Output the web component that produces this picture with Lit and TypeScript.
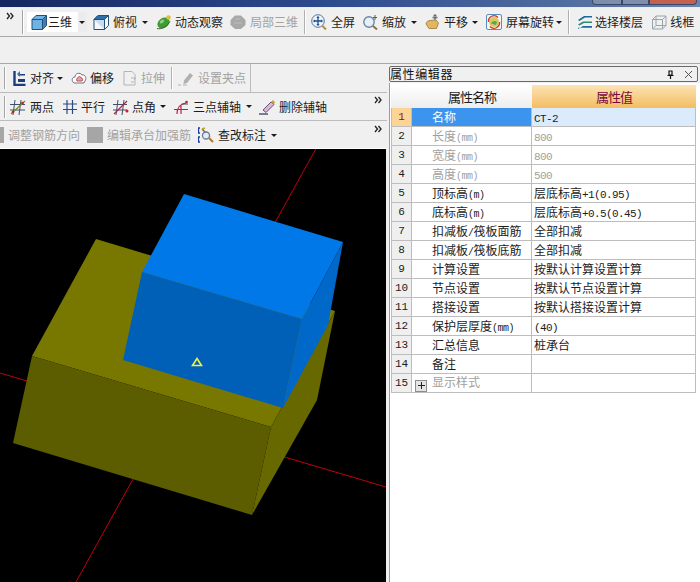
import { LitElement, html, css, svg } from 'lit';
import { customElement } from 'lit/decorators.js';

type Tool = {
  icon: string;
  label: string;
  arrow?: 'mid' | 'near' | 'tight';
  off?: boolean;
  gap?: 1 | 2 | 3;
};

const icons: Record<string, unknown> = {
  cube: svg`<path d="M1 5.500 5 1.500h10.500v10L11.500 15.500H1z" fill="#6fb2e4" stroke="#274e74"/><path d="M1 5.500h10.500v10M11.500 5.500l4-4" fill="none" stroke="#274e74"/><path d="M12 5.800 15 2.500v8.700L12 14.500z" fill="#3d7fb5"/>`,
  top: svg`<path d="M1 5.500 5 1.500h10.500v10L11.500 15.500H1z" fill="#f4f8fc" stroke="#274e74"/><path d="M1 5.500 5 1.500h10.500l-4 4z" fill="#2f6ea8" stroke="#274e74"/><path d="M11.500 5.500v10" stroke="#274e74"/><path d="M1.500 6h9.500v9z" fill="#c7def2"/>`,
  orbit: svg`<ellipse cx="7.500" cy="9" rx="6.500" ry="5" fill="#3f9a38" transform="rotate(-35 7.500 9)"/><ellipse cx="6" cy="7.500" rx="2.500" ry="1.600" fill="#8fd07c" transform="rotate(-35 6 7.500)"/><circle cx="12.500" cy="3.500" r="2.300" fill="#d8c23c"/><path d="M1 14.500c4 1 9-1 13-7" fill="none" stroke="#4a5a3a"/>`,
  local: svg`<path d="M5 1.500h6L15.500 6v5L11 15H5L.5 11V6z" fill="#a8a8a8"/><path d="M5 5h5M4 9h8" stroke="#bcbcbc"/>`,
  full: svg`<circle cx="7" cy="7" r="6.300" fill="#eef3fa" stroke="#51749c"/><path d="M7 2.800v8.400M2.800 7h8.400" stroke="#1c4f94" stroke-width="1.300"/><path d="M7 2 5.400 4h3.200zM7 12l-1.600-2h3.200zM2 7l2-1.600v3.200zM12 7l-2-1.600v3.200z" fill="#1c4f94"/><path d="m11.500 12 3.500 3.500" stroke="#b88a3c" stroke-width="2"/>`,
  zoom: svg`<circle cx="7" cy="8" r="5.200" fill="#e6eef8" stroke="#6b86a8" stroke-width="1.400"/><path d="m11 12 4 3.500" stroke="#8a7440" stroke-width="2"/><path d="M13 1v5M11 3.500h4" stroke="#486a40"/>`,
  pan: svg`<path d="M1 10c0-2 2-3.500 4-3.500l6-.5 2.500 3-2 5.500H4z" fill="#e3b760" stroke="#8c6a2a" stroke-width=".7"/><path d="M10 6V1M8.300 2.500 10 .5l1.700 2M7.500 3.800h5" fill="none" stroke="#3f4f66"/>`,
  rotate: svg`<rect x=".5" y=".5" width="15" height="15" rx="1.500" fill="#f4f6f4" stroke="#5b8cc0"/><circle cx="8" cy="8" r="5" fill="#d8c860"/><path d="M5 9.500c1-2.500 4-3.500 6-1.500l-1 3z" fill="#56a858"/><path d="M2.500 8A5.500 5.500 0 0 1 12 3.500M13.500 8A5.500 5.500 0 0 1 4 12.500" fill="none" stroke="#cc3a28" stroke-width="1.300"/>`,
  floors: svg`<path d="M1 6 7 2h8v1.600H8L2.500 7z" fill="#1c6a9c"/><path d="M1 10.500 6 7.500h9V9H7L2.500 11.500z" fill="#2f8a70"/><path d="M1 15l5-3h9v1.800H1z" fill="#1c6a9c"/>`,
  wire: svg`<path d="M1.500 5.500 5 2h10v9.500L11.500 15h-10zM1.500 5.500h10V15M11.500 5.500 15 2M5 2v9.500h10M5 11.500 1.500 15" fill="none" stroke="#9aa4ac"/>`,
  align: svg`<path d="M1.500 1v14h11" fill="none" stroke="#1a3f7c" stroke-width="2.400"/><path d="M5 4h7v1.500H5zM5 9h7v3H5z" fill="#1a3f7c"/><path d="m7 1-3 3 3 3z" fill="#2e74b8"/>`,
  offset: svg`<path d="M3 13c-3-2-2-6 1-6 0-4 5-5 7-2 3-1 5 3 3 6l-1 2z" fill="#fff" stroke="#6c7480"/><path d="M6 11c-1-2 0-3 1-3 0-2 3-2 3 0 2 0 2 2 1 3z" fill="#e8a0a0" stroke="#c05050"/>`,
  stretch: svg`<path d="M2 1.500h8l3 3V15H2z" fill="none" stroke="#b4b4b4"/><path d="M9 8h5l-2 2M9 12h3" fill="none" stroke="#b4b4b4"/>`,
  grip: svg`<path d="M6 10.500 12 3l3 2.500-6 7.500-3.500 1z" fill="#b0b0b0"/><path d="M0 15h3M5 15h4" stroke="#b0b0b0"/>`,
  two: svg`<path d="M5 1 3 16M11 1 9 16M0 5.500h15M0 11h15" fill="none" stroke="#40506c"/><path d="m1 15 14-13" stroke="#7a8a20" stroke-width="1.300"/><circle cx="12.500" cy="4" r="1.300" fill="#c02020"/><circle cx="3" cy="13" r="1.300" fill="#c02020"/>`,
  parallel: svg`<path d="M5 1v14M10.500 1v14M1 5h14M1 10.500h14" fill="none" stroke="#2a4a88" stroke-width="1.200"/>`,
  angle: svg`<path d="M5 1 3 16M11 1 9 16M0 5.500h14M0 11h14" fill="none" stroke="#40506c"/><path d="m1 15 13-13" stroke="#c02040" stroke-width="1.300"/><circle cx="14" cy="12" r="1.500" fill="#d02020"/>`,
  three: svg`<path d="M4 15c0-6 3-10 9-11M8 7v8M1 10.500h14" fill="none" stroke="#c02040" stroke-width="1.200"/><circle cx="13.500" cy="3" r="1.300" fill="#c02020"/><path d="M9 5h6" stroke="#40506c"/>`,
  erase: svg`<path d="m4 11 8-8 3 2.500-8 8z" fill="#d8b8d8" stroke="#705070"/><path d="m12 3 2-2 2 2-1 2.500z" fill="#c8a040"/><path d="M0 15h9" stroke="#3a3a6a" stroke-width="1.300"/>`,
  edit: svg`<path d="M2 1H.5v5H2M2 15H.5v-5H2" fill="none" stroke="#1a3f9c" stroke-width="1.300"/><path d="M4 2l8 8" stroke="#5a5a5a" stroke-width="1.200"/><circle cx="8" cy="8.500" r="3.500" fill="#e0ecf8" stroke="#6c7c90" stroke-width="1.300"/><path d="m11 11 4 4" stroke="#b07828" stroke-width="2"/><path d="m4 2 3-1" stroke="#c0a030" stroke-width="1.500"/>`,
  square: svg`<rect width="16" height="16" fill="#a6a6a6"/>`,
};

const topTools: Tool[] = [
  { icon: 'top', label: '俯视', arrow: 'mid' },
  { icon: 'orbit', label: '动态观察', gap: 3 },
  { icon: 'local', label: '局部三维', off: true },
];
const viewTools: Tool[] = [
  { icon: 'full', label: '全屏' },
  { icon: 'zoom', label: '缩放', arrow: 'mid' },
  { icon: 'pan', label: '平移', arrow: 'mid', gap: 3 },
  { icon: 'rotate', label: '屏幕旋转', arrow: 'near' },
];
const floorTools: Tool[] = [
  { icon: 'floors', label: '选择楼层', gap: 2 },
  { icon: 'wire', label: '线框', gap: 3 },
];
const modifyTools: Tool[] = [
  { icon: 'align', label: '对齐', arrow: 'tight', gap: 1 },
  { icon: 'offset', label: '偏移', gap: 3 },
  { icon: 'stretch', label: '拉伸', off: true, gap: 3 },
];
const axisTools: Tool[] = [
  { icon: 'two', label: '两点' },
  { icon: 'parallel', label: '平行', gap: 3 },
  { icon: 'angle', label: '点角', arrow: 'mid', gap: 3 },
  { icon: 'three', label: '三点辅轴', arrow: 'mid' },
  { icon: 'erase', label: '删除辅轴' },
];

const rows: Array<{ name: string; value: string; off?: boolean }> = [
  { name: '名称', value: 'CT-2' },
  { name: '长度(mm)', value: '800', off: true },
  { name: '宽度(mm)', value: '800', off: true },
  { name: '高度(mm)', value: '500', off: true },
  { name: '顶标高(m)', value: '层底标高+1(0.95)' },
  { name: '底标高(m)', value: '层底标高+0.5(0.45)' },
  { name: '扣减板/筏板面筋', value: '全部扣减' },
  { name: '扣减板/筏板底筋', value: '全部扣减' },
  { name: '计算设置', value: '按默认计算设置计算' },
  { name: '节点设置', value: '按默认节点设置计算' },
  { name: '搭接设置', value: '按默认搭接设置计算' },
  { name: '保护层厚度(mm)', value: '(40)' },
  { name: '汇总信息', value: '桩承台' },
  { name: '备注', value: '' },
  { name: '显示样式', value: '', off: true },
];

// SimSun style: latin runs are half the width of the hanzi
const mixed = (text: string) =>
  text.split(/([\x20-\x7e]+)/).map((part, i) =>
    i % 2 ? html`<span class="latin">${part}</span>` : part,
  );

@customElement('app-root')
export class AppRoot extends LitElement {
  static styles = css`
    :host {
      display: block;
      width: 700px;
      height: 582px;
      overflow: hidden;
      background: #f0f0f0;
      color: #1c1c1c;
      font: 12px/16px 'Noto Sans CJK SC', 'Liberation Sans', sans-serif;
    }
    .title {
      height: 7px;
      display: flex;
      justify-content: flex-end;
      padding-right: 3px;
      background: linear-gradient(90deg, #16275f, #2b4a8c 45%, #4f6c9f 80%, #6d86ad);
      border-bottom: 1px solid #e8ecf4;
    }
    .winbtn {
      height: 4px;
      border: 1px solid #39496b;
      border-top: 0;
      background: #7e8fae;
    }
    .winbtn.min { width: 28px; border-radius: 0 0 0 4px; }
    .winbtn.max { width: 25px; }
    .winbtn.close { width: 46px; background: #c3604f; border-radius: 0 0 4px 0; }
    .main {
      height: 28px;
      display: flex;
      align-items: center;
      border-bottom: 1px solid #a8a8a8;
    }
    .more {
      width: 8px;
      height: 8px;
      flex: none;
    }
    .main > .more {
      align-self: flex-start;
      margin: 4px 6px 0 6px;
    }
    .grip {
      width: 1px;
      height: 24px;
      flex: none;
      background: #a4a4a4;
      box-shadow: 1px 0 0 #fff;
    }
    .main > .grip { margin-left: 2px; }
    .group {
      display: flex;
      align-items: center;
      gap: 7px;
    }
    .group.floors {
      margin-left: 2px;
      gap: 8px;
    }
    .tool {
      display: flex;
      align-items: center;
      gap: 4px;
      white-space: nowrap;
      height: 20px;
    }
    .tool.g1 { gap: 1px; }
    .tool.g2 { gap: 2px; }
    .tool.g3 { gap: 3px; }
    .tool.off { color: #a2a2a2; }
    .tool svg { width: 16px; height: 16px; flex: none; }
    .arrow {
      flex: none;
      width: 0;
      height: 0;
      border: 3px solid transparent;
      border-top: 3px solid #1c1c1c;
      border-bottom: 0;
    }
    .arrow.mid { margin: 0 1px 0 1px; }
    .arrow.near { margin: 0 0 0 -2px; }
    .arrow.tight { margin: 0 1px 0 2px; }
    .current {
      display: flex;
      align-items: center;
      width: 60px;
      height: 20px;
      margin-left: 4px;
      margin-right: 6px;
      flex: none;
      background: linear-gradient(90deg, #fff 0 51px, #ececec 51px);
      padding-left: 4px;
      gap: 1px;
      box-sizing: border-box;
    }
    .current svg { width: 16px; height: 16px; flex: none; }
    .current .cur-label { width: 24px; flex: none; }
    .current .arrow { margin-left: 6px; }
    .vsep {
      width: 1px;
      height: 24px;
      flex: none;
      margin: 0 6px;
      background: #b0b0b0;
      box-shadow: 1px 0 0 #fff;
    }
    .blank {
      height: 26px;
      border-bottom: 1px solid #a8a8a8;
    }
    .work {
      display: flex;
      height: 518px;
    }
    .left {
      width: 387px;
      flex: none;
      display: flex;
      flex-direction: column;
    }
    .bar {
      height: 27px;
      display: flex;
      align-items: center;
      border-bottom: 1px solid #bcbcbc;
      position: relative;
      flex: none;
    }
    .bar .grip { height: 22px; margin: 0 8px 0 4px; }
    .bar.axis .grip { margin-right: 5px; }
    .bar.axis .group { gap: 8px; }
    .bar.axis .arrow.mid { margin-right: -1px; }
    .bar.boxed-wrap { height: 28px; }
    .boxed {
      display: flex;
      align-items: center;
      height: 100%;
      border-right: 1px solid #bcbcbc;
      padding-right: 4px;
    }
    .boxed .group { gap: 8px; }
    .boxed .group .tool:first-child { margin-right: -1px; }
    .bar .vsep { height: 22px; margin: 0 6px; }
    .bar .more { position: absolute; right: 5px; top: 3px; }
    .bar.rebar { border-bottom-color: #fff; }
    .bar.rebar .more { top: 4px; }
    .bar.rebar .group { margin-left: -12px; padding-top: 1px; }
    .canvas {
      display: block;
      width: 386px;
      height: 433px;
      background: #000;
    }
    .panel {
      width: 311px;
      margin-left: 2px;
      display: flex;
      flex-direction: column;
    }
    .head {
      flex: none;
      height: 14px;
      margin: 2px 2px 0 0;
      border: 1px solid #6a6a6a;
      border-radius: 2px;
      display: flex;
      align-items: center;
      letter-spacing: 0.6px;
      color: #111;
    }
    .head .label { flex: 1; }
    .head svg { width: 9px; height: 9px; flex: none; }
    .head .pin { margin-right: 9px; }
    .head .x { margin-right: 4px; }
    .body {
      flex: 1;
      margin-top: 1px;
      background: #fff;
      border-left: 1px solid #9c9c9c;
      padding: 2px 0 0 1px;
    }
    table {
      border-collapse: separate;
      border-spacing: 0;
      table-layout: fixed;
      width: 305px;
    }
    th, td {
      height: 19px;
      padding: 0;
      box-sizing: border-box;
      border-bottom: 1px solid #bdbdbd;
      border-right: 1px solid #bdbdbd;
      font-weight: 400;
      line-height: 16px;
    }
    td:first-child { border-left: 1px solid #bdbdbd; }
    thead th {
      height: 23px;
      text-align: center;
      font-size: 13px;
      letter-spacing: -1px;
      border: 0;
      background: linear-gradient(#ffffff, #ededed);
    }
    thead th.value {
      color: #7a0a3c;
      background: linear-gradient(#fde3b4, #f3bd62);
    }
    .num {
      text-align: center;
      background: #efefef;
      font-family: 'Liberation Mono', monospace;
      font-size: 11px;
    }
    .name {
      padding-left: 20px;
      white-space: nowrap;
    }
    .val {
      padding-left: 2px;
      white-space: nowrap;
    }
    tr.off td:not(.num) { color: #a0a0a0; }
    tr.sel .num { background: #fbd496; color: #8a1a10; }
    tr.sel .name { background: #3c94ee; color: #fff; }
    tr.sel .val { background: #dcebfb; }
    .latin {
      font-family: 'Liberation Mono', monospace;
      font-size: 11px;
      letter-spacing: -0.6px;
      line-height: 1;
    }
    .name .latin { font-size: 10px; letter-spacing: -0.5px; }
    .expand {
      display: inline-flex;
      align-items: center;
      justify-content: center;
      box-sizing: border-box;
      width: 12px;
      height: 12px;
      margin: 0 5px 0 -17px;
      background: #e4e4e4;
      border: 1px solid #8c8c8c;
      vertical-align: -2px;
    }
    .expand svg { width: 7px; height: 7px; }
  `;

  private chevrons() {
    return html`<svg class="more" viewBox="0 0 8 8">
      <path d="m1 1 2.500 3L1 7M4.500 1 7 4 4.500 7" fill="none" stroke="#222" stroke-width="1.300" />
    </svg>`;
  }

  private tool(t: Tool) {
    return html`<div class="tool ${t.off ? 'off' : ''} ${t.gap ? `g${t.gap}` : ''}">
      <svg viewBox="0 0 16 16">${icons[t.icon]}</svg>
      <span>${t.label}</span>
      ${t.arrow ? html`<i class="arrow ${t.arrow}"></i>` : ''}
    </div>`;
  }

  private mainBar() {
    return html`<div class="main">
      ${this.chevrons()}
      <span class="grip"></span>
      <div class="current">
        <svg viewBox="0 0 16 16">${icons.cube}</svg>
        <span class="cur-label">三维</span>
        <i class="arrow"></i>
      </div>
      <div class="group">${topTools.map((t) => this.tool(t))}</div>
      <span class="vsep"></span>
      <div class="group">${viewTools.map((t) => this.tool(t))}</div>
      <span class="vsep"></span>
      <div class="group floors">${floorTools.map((t) => this.tool(t))}</div>
    </div>`;
  }

  private scene() {
    return html`<svg class="canvas" viewBox="0 149 386 433">
      <path d="M318 145 76 582M0 373l386 114" stroke="#c00010" stroke-width="1" fill="none" />
      <path d="M96 239 335 311 271 427 32 356z" fill="#787800" />
      <path d="M32 356 271 427 252 515 13 443z" fill="#5c5c00" />
      <path d="M335 311 317 400 252 515 271 427z" fill="#686800" />
      <path d="M184 194 343 242 302 319 142 272z" fill="#0078e8" />
      <path d="M142 272 302 319 283 408 123 360z" fill="#0060b8" />
      <path d="M343 242 328 325 283 408 302 319z" fill="#0068c8" />
      <path d="M197 358.500 201.500 365.500H192.500z" fill="none" stroke="#f0f048" stroke-width="1.600" />
    </svg>`;
  }

  private table() {
    return html`<table>
      <colgroup><col style="width:21px" /><col style="width:120px" /><col /></colgroup>
      <thead>
        <tr><th></th><th>属性名称</th><th class="value">属性值</th></tr>
      </thead>
      <tbody>
        ${rows.map(
          (r, i) => html`<tr class="${i === 0 ? 'sel' : ''} ${r.off ? 'off' : ''}">
            <td class="num">${i + 1}</td>
            <td class="name">
              ${i === 14
                ? html`<span class="expand"><svg viewBox="0 0 7 7"><path d="M3.500 0v7M0 3.500h7" stroke="#222" /></svg></span>`
                : ''}${mixed(r.name)}
            </td>
            <td class="val">${mixed(r.value)}</td>
          </tr>`,
        )}
      </tbody>
    </table>`;
  }

  render() {
    return html`
      <div class="title">
        <i class="winbtn min"></i><i class="winbtn max"></i><i class="winbtn close"></i>
      </div>
      ${this.mainBar()}
      <div class="blank"></div>
      <div class="work">
        <div class="left">
          <div class="bar boxed-wrap">
            <div class="boxed">
              <span class="grip"></span>
              <div class="group">${modifyTools.map((t) => this.tool(t))}</div>
              <span class="vsep"></span>
              ${this.tool({ icon: 'grip', label: '设置夹点', off: true })}
            </div>
          </div>
          <div class="bar axis">
            <span class="grip"></span>
            <div class="group">${axisTools.map((t) => this.tool(t))}</div>
            ${this.chevrons()}
          </div>
          <div class="bar rebar">
            <div class="group">
              ${this.tool({ icon: 'square', label: '调整钢筋方向', off: true })}
              ${this.tool({ icon: 'square', label: '编辑承台加强筋', off: true })}
              ${this.tool({ icon: 'edit', label: '查改标注', arrow: 'mid' })}
            </div>
            ${this.chevrons()}
          </div>
          ${this.scene()}
        </div>
        <div class="panel">
          <div class="head">
            <span class="label">属性编辑器</span>
            <svg class="pin" viewBox="0 0 9 9"><path d="M2.500 1h4M3 1v4h3V1M1.500 5.500h6M4.500 5.500V9" fill="none" stroke="#111" stroke-width="1.200" /></svg>
            <svg class="x" viewBox="0 0 9 9"><path d="m1 1 7 7M8 1 1 8" stroke="#555" /></svg>
          </div>
          <div class="body">${this.table()}</div>
        </div>
      </div>
    `;
  }
}
